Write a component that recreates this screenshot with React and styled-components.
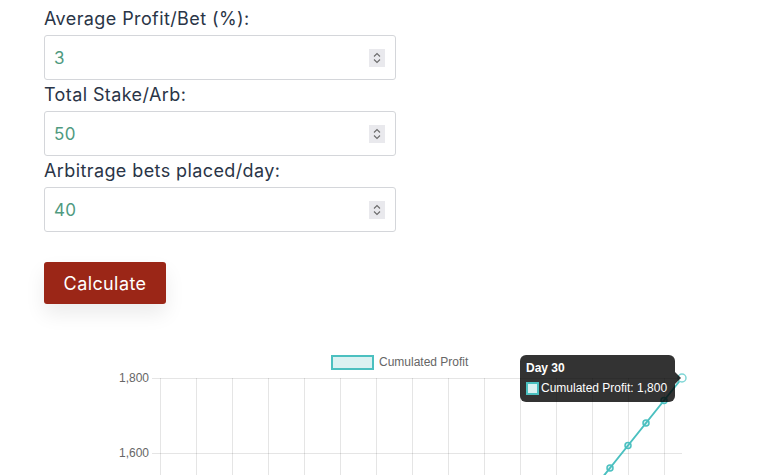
import React from 'react'
import styled, { createGlobalStyle } from 'styled-components'

const GlobalStyle = createGlobalStyle`
    body {
        margin: 0;
        background: #ffffff;
        font-family: 'Inter', 'Noto Sans', sans-serif;
    }
`;

const Page = styled.div`
    padding: 4px 0 0 44px;
    display: flex;
    flex-direction: column;
`;
const Form = styled.form`
    display: flex;
    flex-direction: column;
    width: 352px;
`;
const Label = styled.label`
    display: block;
    height: 31px;
    line-height: 30px;
    font-size: 18px;
    letter-spacing: 0.4px;
    color: #2a3547;
`;
const Field = styled.div`
    position: relative;
    height: 45px;
    box-sizing: border-box;
    border: 1px solid #d4d6da;
    border-radius: 3px;
    display: flex;
    align-items: center;
    padding: 0 10px 0 9px;
`;
const Value = styled.span`
    flex: 1;
    font-size: 17px;
    letter-spacing: 0.3px;
    color: #4f9a80;
`;
const Spinner = styled.span`
    width: 16px;
    height: 18px;
    background: #e9e9ed;
    display: flex;
    align-items: center;
    justify-content: center;
`;
const Button = styled.button`
    margin-top: 30px;
    width: 122px;
    height: 42px;
    border: none;
    border-radius: 3px;
    background: #9b2617;
    color: #ffffff;
    font-family: 'Inter', 'Noto Sans', sans-serif;
    font-size: 18px;
    letter-spacing: 0.4px;
    box-shadow: 0 10px 20px rgba(0, 0, 0, 0.08);
    cursor: pointer;
`;
const ChartWrap = styled.div`
    position: relative;
    margin-top: 36px;
    width: 680px;
`;
const Tooltip = styled.div`
    position: absolute;
    left: 476px;
    top: 15px;
    width: 155px;
    height: 47px;
    box-sizing: border-box;
    padding: 6px 6px 0 6px;
    background: rgba(0, 0, 0, 0.8);
    border-radius: 6px;
    color: #ffffff;
    font-family: 'Liberation Sans', Arial, sans-serif;
    font-size: 12px;
    &:after {
        content: '';
        position: absolute;
        right: -6px;
        top: 17px;
        border-style: solid;
        border-width: 6px 0 6px 6px;
        border-color: transparent transparent transparent rgba(0, 0, 0, 0.8);
    }
`;
const TipTitle = styled.div`
    font-weight: bold;
    height: 20px;
    line-height: 14px;
`;
const TipRow = styled.div`
    display: flex;
    align-items: center;
    gap: 2px;
    line-height: 14px;
`;
const Swatch = styled.span`
    width: 13px;
    height: 13px;
    box-sizing: border-box;
    border: 2px solid #4bc0c0;
    background: #dbf2f2;
`;

function SpinIcon() {
    return (
        <svg width="10" height="14" viewBox="0 0 10 14">
            <path d="M2 5.5 L5 2.5 L8 5.5 M2 8.5 L5 11.5 L8 8.5" fill="none" stroke="#6b6b6b" strokeWidth="1.1" />
        </svg>
    )
}

const fields = [
    { label: 'Average Profit/Bet (%):', value: '3' },
    { label: 'Total Stake/Arb:', value: '50' },
    { label: 'Arbitrage bets placed/day:', value: '40' },
]

// chart geometry in local coords (svg starts at page x=44, y=340)
const OX = 44
const OY = 340
const xOf = n => 160 + 18 * (n - 1) - OX
const yOf = v => 378 + (1800 - v) * 0.375 - OY

function Chart() {
    const days = Array.from({ length: 30 }, (_, i) => i + 1)
    const pts = days.map(d => [xOf(d), yOf(d * 60)])
    const line = pts.map((p, i) => (i ? 'L' : 'M') + p[0] + ' ' + p[1]).join(' ')
    const ticks = [1800, 1600]
    const verts = Array.from({ length: 15 }, (_, i) => 160 + 36 * i - OX)
    const left = 160 - OX
    const right = 682 - OX
    return (
        <svg width="680" height="135" viewBox="0 0 680 135">
            <rect x={288} y={16} width={41} height={13} fill="rgba(75,192,192,0.2)" stroke="#4bc0c0" strokeWidth="2" />
            <text x={335} y={26} fontSize="12" fill="#666" fontFamily="'Liberation Sans', Arial, sans-serif">Cumulated Profit</text>
            {verts.map(x => (
                <line key={x} x1={x + 0.5} x2={x + 0.5} y1={yOf(1800)} y2={135} stroke="rgba(0,0,0,0.1)" />
            ))}
            {ticks.map(t => (
                <g key={t}>
                    <line x1={left - 8} x2={right} y1={yOf(t) + 0.5} y2={yOf(t) + 0.5} stroke="rgba(0,0,0,0.1)" />
                    <text x={left - 11} y={yOf(t) + 4} fontSize="12" textAnchor="end" fill="#666" fontFamily="'Liberation Sans', Arial, sans-serif">
                        {t.toLocaleString('en-US')}
                    </text>
                </g>
            ))}
            <path d={line} fill="none" stroke="#4bc0c0" strokeWidth="2" />
            {pts.slice(0, 29).map(p => (
                <circle key={p[0]} cx={p[0]} cy={p[1]} r="3" fill="rgba(75,192,192,0.2)" stroke="#4bc0c0" strokeWidth="1.5" />
            ))}
            <circle cx={pts[29][0]} cy={pts[29][1]} r="4" fill="#ffffff" stroke="#7fd6d6" strokeWidth="1.5" />
        </svg>
    )
}

export default function App() {
    return (
        <Page>
            <GlobalStyle />
            <Form onSubmit={e => e.preventDefault()}>
                {fields.map(f => (
                    <div key={f.label}>
                        <Label>{f.label}</Label>
                        <Field>
                            <Value>{f.value}</Value>
                            <Spinner><SpinIcon /></Spinner>
                        </Field>
                    </div>
                ))}
                <Button type="submit">Calculate</Button>
            </Form>
            <ChartWrap>
                <Chart />
                <Tooltip>
                    <TipTitle>Day 30</TipTitle>
                    <TipRow><Swatch />Cumulated Profit: 1,800</TipRow>
                </Tooltip>
            </ChartWrap>
        </Page>
    )
}
